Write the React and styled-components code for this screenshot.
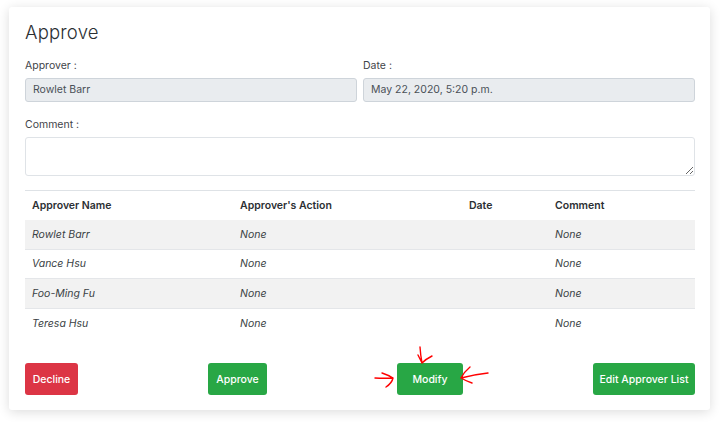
import React from "react";
import styled, { createGlobalStyle } from "styled-components";

const Global = createGlobalStyle`
  html, body { margin: 0; padding: 0; background: #fff; }
  body { font-family: "Inter", "Liberation Sans", sans-serif; color: #212529; }
  * { box-sizing: border-box; }
`;
const Page = styled.div`
  width: 720px; height: 422px; padding: 7px 10px 12px 9px; overflow: hidden;
`;
const Card = styled.section`
  height: 403px; background: #fff; border-radius: 3px;
  box-shadow: 0 2px 12px rgba(0,0,0,.14);
  padding: 14px 15px 15px 16px;
  display: flex; flex-direction: column;
`;
const Title = styled.h2`
  margin: 0; font-size: 18.5px; font-weight: 300; line-height: 22px; color: #2b2f33;
  letter-spacing: .2px;
`;
const FieldRow = styled.div`
  display: grid; grid-template-columns: 332px 332px; column-gap: 6px; margin-top: 15px;
`;
const Field = styled.div` display: flex; flex-direction: column; `;
const Label = styled.label`
  font-size: 10.5px; line-height: 16px; height: 20px; color: #3f4449;
`;
const ReadOnly = styled.div`
  height: 24px; background: #e9ecef; border: 1px solid #ced4da; border-radius: 3px;
  padding: 0 7px; font-size: 10.5px; line-height: 22px; color: #495057;
`;
const CommentField = styled.div`
  display: flex; flex-direction: column; margin-top: 15px;
`;
const TextArea = styled.textarea`
  display: block; width: 670px; height: 39px; margin: 0; background: #fff;
  border: 1px solid #dfe3e7; border-radius: 3px; padding: 4px 7px;
  font: inherit; outline: none;
`;
const Table = styled.table`
  width: 670px; margin-top: 14px; border-collapse: collapse; table-layout: fixed;
  border-top: 1px solid #dee2e6;
`;
const Th = styled.th`
  width: ${p => p.$w}px; height: 29px; padding: 0 7px; text-align: left;
  font-size: 10.5px; font-weight: 600; color: #2b2f33;
`;
const Row = styled.tr`
  background: ${p => (p.$odd ? "#f2f2f2" : "#fff")};
`;
const Td = styled.td`
  height: 29.5px; padding: 0 7px; border-bottom: ${p => (p.$last ? "0" : "1px solid #e4e6e9")};
  font-size: 10.5px; font-style: italic; color: #3a3f44;
`;
const Actions = styled.div`
  display: flex; justify-content: space-between; margin-top: auto; width: 670px;
`;
const Button = styled.button`
  position: relative; height: 32px; width: ${p => p.$w}px; padding: 0; margin: 0;
  border: 0; border-radius: 3px; color: #fff; font: inherit; font-size: 10.5px; font-weight: 500;
  background: ${p => (p.$danger ? "#dc3545" : "#28a745")};
`;
const Arrows = styled.svg`
  position: absolute; left: -24px; top: -18px; width: 120px; height: 50px; overflow: visible;
  pointer-events: none;
`;

const rows = ["Rowlet Barr", "Vance Hsu", "Foo-Ming Fu", "Teresa Hsu"];

export default function App() {
  return (
    <Page>
      <Global />
      <Card>
        <Title>Approve</Title>
        <FieldRow>
          <Field>
            <Label>Approver :</Label>
            <ReadOnly>Rowlet Barr</ReadOnly>
          </Field>
          <Field>
            <Label>Date :</Label>
            <ReadOnly>May 22, 2020, 5:20 p.m.</ReadOnly>
          </Field>
        </FieldRow>
        <CommentField>
          <Label>Comment :</Label>
          <TextArea />
        </CommentField>
        <Table>
          <thead>
            <tr>
              <Th $w={208}>Approver Name</Th>
              <Th $w={229}>Approver's Action</Th>
              <Th $w={86}>Date</Th>
              <Th $w={147}>Comment</Th>
            </tr>
          </thead>
          <tbody>
            {rows.map((name, i) => {
              const last = i === rows.length - 1;
              return (
                <Row key={name} $odd={i % 2 === 0}>
                  <Td $last={last}>{name}</Td>
                  <Td $last={last}>None</Td>
                  <Td $last={last}></Td>
                  <Td $last={last}>None</Td>
                </Row>
              );
            })}
          </tbody>
        </Table>
        <Actions>
          <Button $danger $w={53}>Decline</Button>
          <Button $w={59}>Approve</Button>
          <Button $w={66}>
            Modify
            <Arrows viewBox="0 0 120 50" fill="none" stroke="#f00" strokeWidth="1.4" strokeLinecap="round" strokeLinejoin="round">
              <path d="M47 2 Q47.5 10 49 18 M59 11 Q53 14 49 18 Q47 14 45 10" />
              <path d="M2 33 Q11 33.5 20 33 M9 28 Q15 30 20 33 Q19 38 13 42" />
              <path d="M115 28 Q101 29.5 88 33 M97 22 Q91 27 88 33 Q93 36 99 38" />
            </Arrows>
          </Button>
          <Button $w={102}>Edit Approver List</Button>
        </Actions>
      </Card>
    </Page>
  );
}
